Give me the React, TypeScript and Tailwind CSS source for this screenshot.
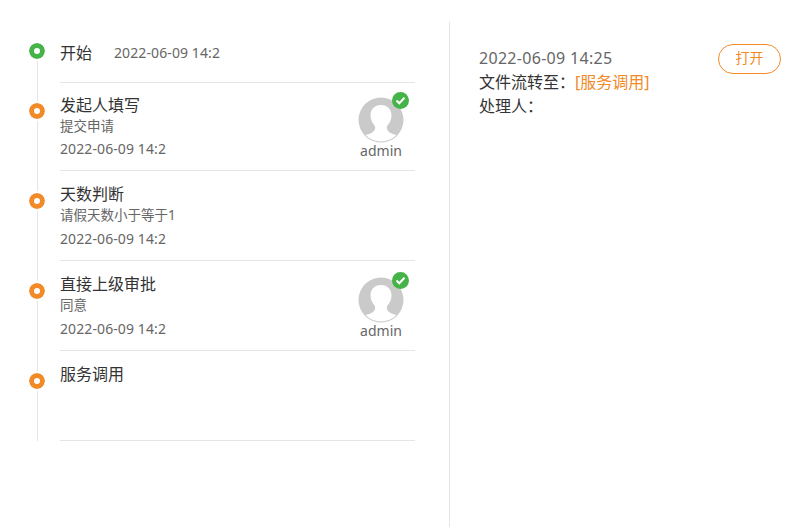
const font = { fontFamily: '"Noto Sans", "Noto Sans CJK SC", sans-serif' };

function Avatar() {
  return (
    <div className="relative flex w-[46px] flex-col items-center">
      <svg width="46" height="46" viewBox="0 0 46 46">
        <circle cx="23" cy="23" r="22.5" fill="#cacaca" />
        <path
          d="M23 8C16.5 8 12.5 12.5 12.5 18.5C12.5 23 14.5 26 16.5 28.5C18 31 17 34 13.5 36C11.5 37 9.5 37.5 7.5 38A21.6 21.6 0 0 0 38.5 38C36.5 37.5 34.5 37 32.5 36C29 34 28 31 29.5 28.5C31.5 26 33.5 23 33.5 18.5C33.5 12.5 29.5 8 23 8Z"
          fill="#fff"
        />
      </svg>
      <span className="-mt-[2px] text-sm leading-5 text-[#666]">admin</span>
      <span className="absolute -top-[5px] right-[-5px] flex h-[17px] w-[17px] items-center justify-center rounded-full bg-[#45b348]">
        <svg width="11" height="11" viewBox="0 0 11 11" fill="none" stroke="#fff" strokeWidth="2">
          <path d="M1.5 5.5l2.8 2.8 5.2-5.5" />
        </svg>
      </span>
    </div>
  );
}

const steps = [
  { title: '发起人填写', desc: '提交申请', date: '2022-06-09 14:2', user: true, h: 'h-[88px]', dot: 'top-[20px]', pt: 'pt-[11px]', dm: 'mt-[1px]', am: 'mt-[14px]' },
  { title: '天数判断', desc: '请假天数小于等于1', date: '2022-06-09 14:2', user: false, h: 'h-[90px]', dot: 'top-[22px]', pt: 'pt-[12px]', dm: 'mt-[2px]', am: 'mt-[15px]' },
  { title: '直接上级审批', desc: '同意', date: '2022-06-09 14:2', user: true, h: 'h-[90px]', dot: 'top-[22px]', pt: 'pt-[12px]', dm: 'mt-[2px]', am: 'mt-[16px]' },
  { title: '服务调用', desc: '', date: '', user: false, h: 'h-[90px]', dot: 'top-[22px]', pt: 'pt-[12px]', dm: 'mt-[2px]', am: 'mt-[15px]' },
];

export default function App() {
  return (
    <div className="flex h-screen bg-white pt-[22px]" style={font}>
      <div className="w-[450px] border-r border-[#e5e5e5] pl-[37px] pr-[34px] pt-[28px]">
        <div className="border-l border-[#e5e5e5]">
          <div className="relative h-[33px] pl-[22px]">
            <span className="absolute left-[-9px] top-[-7px] box-content h-[6px] w-[6px] rounded-full border-[5px] border-[#45b348] bg-white outline-2 outline-white" />
            <div className="flex h-[33px] items-start gap-[22px] border-b border-[#e5e5e5]">
              <span className="text-base leading-[6px] text-[#333]">开始</span>
              <span className="text-sm leading-[6px] tracking-[0.1px] text-[#666]">2022-06-09 14:2</span>
            </div>
          </div>
          {steps.map((s) => (
            <div key={s.title} className={`relative pl-[22px] ${s.h}`}>
              <span className={`absolute left-[-9px] box-content h-[6px] w-[6px] rounded-full border-[5px] border-[#f18a27] bg-white outline-2 outline-white ${s.dot}`} />
              <div className="flex h-full items-start justify-between border-b border-[#e5e5e5]">
                <div className={`flex flex-col ${s.pt}`}>
                  <span className="text-base leading-[22px] text-[#333]">{s.title}</span>
                  <span className="-mt-[1px] text-[13.5px] leading-[22px] text-[#666]">{s.desc}</span>
                  <span className={`text-sm leading-[22px] tracking-[0.1px] text-[#666] ${s.dm}`}>{s.date}</span>
                </div>
                {s.user && (
                  <div className={`mr-[11px] ${s.am}`}>
                    <Avatar />
                  </div>
                )}
              </div>
            </div>
          ))}
        </div>
      </div>
      <div className="flex flex-1 items-start justify-between pl-[29px] pr-[26px] pt-[22px]">
        <div className="flex flex-col pt-[2px] text-base leading-6 text-[#333]">
          <span className="tracking-[0.3px] text-[#666]">2022-06-09 14:25</span>
          <span>
            文件流转至：<span className="text-[#f18a27]">[服务调用]</span>
          </span>
          <span>处理人：</span>
        </div>
        <button className="h-[30px] w-[63px] rounded-full border border-[#f18a27] pb-[2px] text-sm text-[#f18a27]">打开</button>
      </div>
    </div>
  );
}
